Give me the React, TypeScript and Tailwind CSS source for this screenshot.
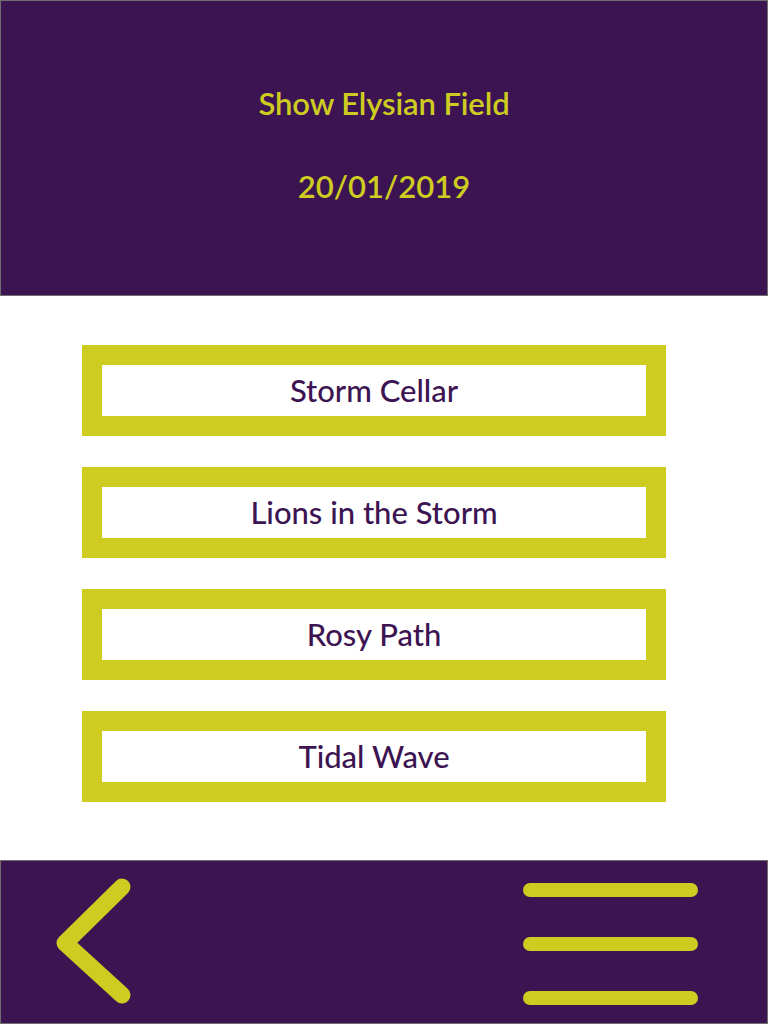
const SONGS = ['Storm Cellar', 'Lions in the Storm', 'Rosy Path', 'Tidal Wave'];

export default function App() {
  return (
    <div className="w-[768px] h-[1024px] bg-white flex flex-col" style={{ fontFamily: 'Lato, "Open Sans", sans-serif' }}>
      {/* header */}
      <div className="h-[296px] bg-[#3c1452] border border-[#6e6e6e] flex flex-col items-center text-[#cfcc21] font-semibold">
        <h1 className="mt-[82px] text-[31px] leading-[40px] tracking-[-0.1px]">Show Elysian Field</h1>
        <p className="mt-[43px] text-[31px] leading-[40px]">20/01/2019</p>
      </div>

      {/* song list */}
      <div className="flex-1 flex flex-col pl-[82px] pt-[49px] gap-[31px]">
        {SONGS.map(s => (
          <div key={s} className="w-[584px] h-[91px] bg-[#cfcc21] p-[20px]">
            <div className="h-full bg-white flex items-center justify-center text-[#3c1452] text-[31px] font-medium">
              {s}
            </div>
          </div>
        ))}
      </div>

      {/* footer nav */}
      <div className="h-[164px] bg-[#3c1452] border border-[#6e6e6e] flex items-center justify-between pl-[53px] pr-[69px]">
        <svg width="84" height="132" viewBox="0 0 84 132">
          <polyline points="68,11 11,67 68,119" fill="none" stroke="#cfcc21" strokeWidth="17" strokeLinecap="round" strokeLinejoin="round" />
        </svg>
        <div className="flex flex-col gap-[40px] mt-[4px]">
          <div className="w-[175px] h-[14px] rounded-full bg-[#cfcc21]" />
          <div className="w-[175px] h-[14px] rounded-full bg-[#cfcc21]" />
          <div className="w-[175px] h-[14px] rounded-full bg-[#cfcc21]" />
        </div>
      </div>
    </div>
  );
}
